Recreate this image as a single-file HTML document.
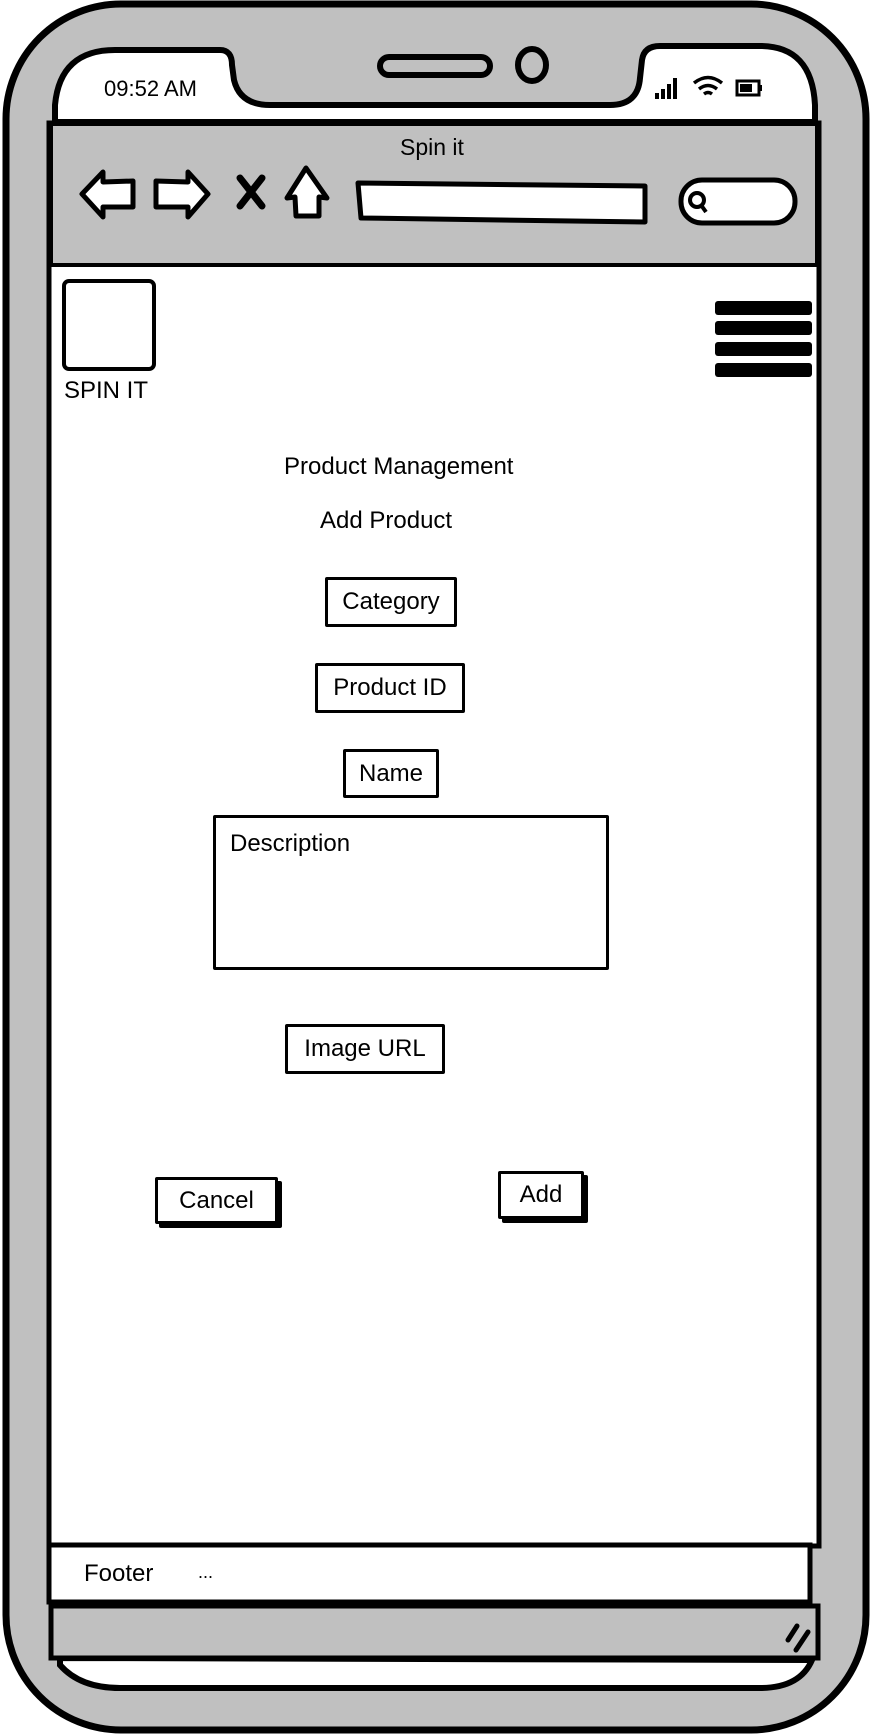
<!DOCTYPE html>
<html><head><meta charset="utf-8"><style>
*{margin:0;padding:0;box-sizing:border-box}
body{width:872px;height:1734px;background:#fff;position:relative;overflow:hidden;font-family:"Liberation Sans",sans-serif;color:#000}
.a{position:absolute}
.t{position:absolute;white-space:nowrap;font-size:24px}
.box{position:absolute;border:3px solid #000;background:#fff;display:flex;align-items:center;justify-content:center;font-size:24px;border-radius:2px}
.sh{box-shadow:4px 4px 0 #000}
</style></head><body>
<svg class="a" style="left:0;top:0" width="872" height="1734">
<rect x="6" y="4" width="860" height="1726" rx="115" fill="#c0c0c0" stroke="#000" stroke-width="7"/>
<path d="M55 122 L55 105 Q60 50 115 50 L220 50 Q232 50 232 65 L234 80 Q240 105 270 105 L610 105 Q638 105 640 78 L642 60 Q644 46 660 46 L760 46 Q812 46 815 105 L815 122 Z" fill="#fff" stroke="#000" stroke-width="6"/>
<path d="M60 1658 L60 1665 Q80 1688 120 1688 L760 1688 Q800 1688 812 1660 Z" fill="#fff" stroke="#000" stroke-width="6"/>
<rect x="49" y="123" width="770" height="1423" fill="#fff" stroke="#000" stroke-width="5"/>
<rect x="51" y="124" width="766" height="141" fill="#c0c0c0" stroke="#000" stroke-width="4"/>
<rect x="51" y="1606" width="767" height="52" fill="#c0c0c0" stroke="#000" stroke-width="5"/>
<path d="M788 1640 L797 1626 M796 1650 L808 1632" stroke="#000" stroke-width="5" stroke-linecap="round"/>
<rect x="380" y="57" width="110" height="18" rx="9" fill="none" stroke="#000" stroke-width="6"/>
<ellipse cx="532" cy="65" rx="14" ry="16" fill="none" stroke="#000" stroke-width="6"/>
<g fill="#000"><rect x="655" y="93" width="4" height="6"/><rect x="661" y="89" width="4" height="10"/><rect x="667" y="84" width="4" height="15"/><rect x="673" y="78" width="4" height="21"/></g>
<path d="M694 83 Q708 72 722 83 M699 89 Q708 82 717 89 M704 94 Q708 91 712 94" fill="none" stroke="#000" stroke-width="3.5"/>
<rect x="737" y="81" width="22" height="14" fill="none" stroke="#000" stroke-width="3"/><rect x="740" y="84" width="12" height="8"/><rect x="759" y="85" width="3" height="6"/>
<path d="M82 194 L103 172 L103 182 L133 181 L133 207 L103 207 L103 217 Z" fill="#fff" stroke="#000" stroke-width="5" stroke-linejoin="round"/>
<path d="M208 194 L188 172 L188 182 L156 181 L156 207 L188 207 L188 217 Z" fill="#fff" stroke="#000" stroke-width="5" stroke-linejoin="round"/>
<path d="M240 178 L262 206 M262 178 L240 206" stroke="#000" stroke-width="7" stroke-linecap="round"/>
<path d="M306 168 L287 198 L295 197 L296 216 L319 216 L319 197 L327 198 Z" fill="#fff" stroke="#000" stroke-width="5" stroke-linejoin="round"/>
<path d="M358 183 L645 186 L645 222 L361 218 Z" fill="#fff" stroke="#000" stroke-width="5" stroke-linejoin="round"/>
<rect x="681" y="180" width="114" height="43" rx="21" fill="#fff" stroke="#000" stroke-width="5"/>
<circle cx="697" cy="200" r="7" fill="none" stroke="#000" stroke-width="4"/><path d="M701 205 L706 212" stroke="#000" stroke-width="4"/>
<rect x="64" y="281" width="90" height="88" rx="5" fill="#fff" stroke="#000" stroke-width="4"/>
<g fill="#000"><rect x="715" y="301" width="97" height="14" rx="3"/><rect x="715" y="321" width="97" height="14" rx="3"/><rect x="715" y="342" width="97" height="14" rx="3"/><rect x="715" y="363" width="97" height="14" rx="3"/></g>
<rect x="49" y="1545" width="761" height="57" fill="#fff" stroke="#000" stroke-width="5"/>
</svg>
<div class="t" style="left:104px;top:76px;font-size:22px">09:52 AM</div>
<div class="t" style="left:400px;top:134px;font-size:23px">Spin it</div>
<div class="t" style="left:64px;top:377px;font-size:24px">SPIN IT</div>
<div class="t" style="left:284px;top:453px">Product Management</div>
<div class="t" style="left:320px;top:507px">Add Product</div>
<div class="box" style="left:325px;top:577px;width:132px;height:50px">Category</div>
<div class="box" style="left:315px;top:663px;width:150px;height:50px">Product ID</div>
<div class="box" style="left:343px;top:749px;width:96px;height:49px">Name</div>
<div class="box" style="left:213px;top:815px;width:396px;height:155px;align-items:flex-start;justify-content:flex-start;padding:12px 14px">Description</div>
<div class="box" style="left:285px;top:1024px;width:160px;height:50px">Image URL</div>
<div class="box sh" style="left:155px;top:1177px;width:123px;height:47px">Cancel</div>
<div class="box sh" style="left:498px;top:1171px;width:86px;height:48px">Add</div>
<div class="t" style="left:84px;top:1560px">Footer</div>
<div class="t" style="left:198px;top:1562px;font-size:18px">...</div>
</body></html>
